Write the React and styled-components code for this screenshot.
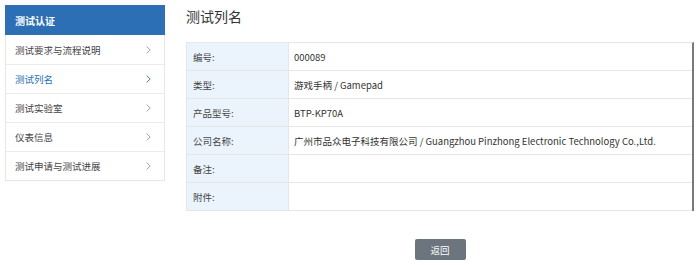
import React from 'react'
import styled, { createGlobalStyle } from 'styled-components'

const GlobalStyle = createGlobalStyle`
  body {
    margin: 0;
    background: #fff;
    font-family: "Noto Sans CJK SC", "Noto Sans", sans-serif;
    color: #333;
  }
`

const Page = styled.div`
  display: flex;
  align-items: flex-start;
  gap: 21px;
  padding: 5px 6px 0 5px;
`

const Sidebar = styled.div`
  width: 160px;
  flex-shrink: 0;
`

const SideHeader = styled.div`
  height: 30px;
  display: flex;
  align-items: center;
  padding-left: 10px;
  background: #2c6fb5;
  color: #fff;
  font-size: 10px;
  font-weight: bold;
`

const SideList = styled.div`
  border: 1px solid #e6e6e6;
  border-top: none;
`

const SideItem = styled.div`
  height: 29px;
  display: flex;
  align-items: center;
  justify-content: space-between;
  padding: 0 13px 0 9px;
  font-size: 9.5px;
  color: ${(p) => (p.$active ? '#2c6fb5' : '#444')};
  border-top: ${(p) => (p.$first ? 'none' : '1px solid #ececec')};
  box-sizing: border-box;
`

const Chevron = ({ color }) => (
  <svg width="5" height="8" viewBox="0 0 5 8">
    <polyline points="0.6,0.6 4.2,4 0.6,7.4" fill="none" stroke={color} strokeWidth="0.9" />
  </svg>
)

const Main = styled.div`
  flex: 1;
  display: flex;
  flex-direction: column;
`

const Title = styled.h1`
  margin: 0;
  height: 37px;
  font-size: 14px;
  font-weight: normal;
  color: #333;
  line-height: 22px;
`

const Table = styled.div`
  border-top: 1px solid #e6e6e6;
  border-left: 1px solid #e6e6e6;
  border-right: 2px solid #7a7a7a;
`

const Row = styled.div`
  display: flex;
  height: 28px;
  border-bottom: 1px solid #e6e6e6;
  box-sizing: border-box;
`

const Label = styled.div`
  width: 95px;
  flex-shrink: 0;
  display: flex;
  align-items: center;
  padding-left: 6px;
  background: #ebf4fd;
  border-right: 1px solid #e6e6e6;
  font-size: 9.5px;
  color: #444;
`

const Value = styled.div`
  flex: 1;
  display: flex;
  align-items: center;
  padding-left: 5px;
  font-size: 9.5px;
  color: #333;
  white-space: nowrap;
`

const Actions = styled.div`
  display: flex;
  justify-content: center;
  margin-top: 28px;
`

const Button = styled.button`
  width: 51px;
  height: 21px;
  border: none;
  border-radius: 2px;
  background: #6c757d;
  color: #fff;
  font-family: inherit;
  font-size: 9.5px;
  padding: 0;
`

const menu = ['测试要求与流程说明', '测试列名', '测试实验室', '仪表信息', '测试申请与测试进展']

const rows = [
  ['编号:', '000089'],
  ['类型:', '游戏手柄 / Gamepad'],
  ['产品型号:', 'BTP-KP70A'],
  ['公司名称:', '广州市品众电子科技有限公司 / Guangzhou Pinzhong Electronic Technology Co.,Ltd.'],
  ['备注:', ''],
  ['附件:', ''],
]

export default function App() {
  return (
    <>
      <GlobalStyle />
      <Page>
        <Sidebar>
          <SideHeader>测试认证</SideHeader>
          <SideList>
            {menu.map((m, i) => (
              <SideItem key={m} $first={i === 0} $active={i === 1}>
                <span>{m}</span>
                <Chevron color={i === 1 ? '#2c6fb5' : '#999'} />
              </SideItem>
            ))}
          </SideList>
        </Sidebar>
        <Main>
          <Title>测试列名</Title>
          <Table>
            {rows.map(([k, v]) => (
              <Row key={k}>
                <Label>{k}</Label>
                <Value>{v}</Value>
              </Row>
            ))}
          </Table>
          <Actions>
            <Button>返回</Button>
          </Actions>
        </Main>
      </Page>
    </>
  )
}
